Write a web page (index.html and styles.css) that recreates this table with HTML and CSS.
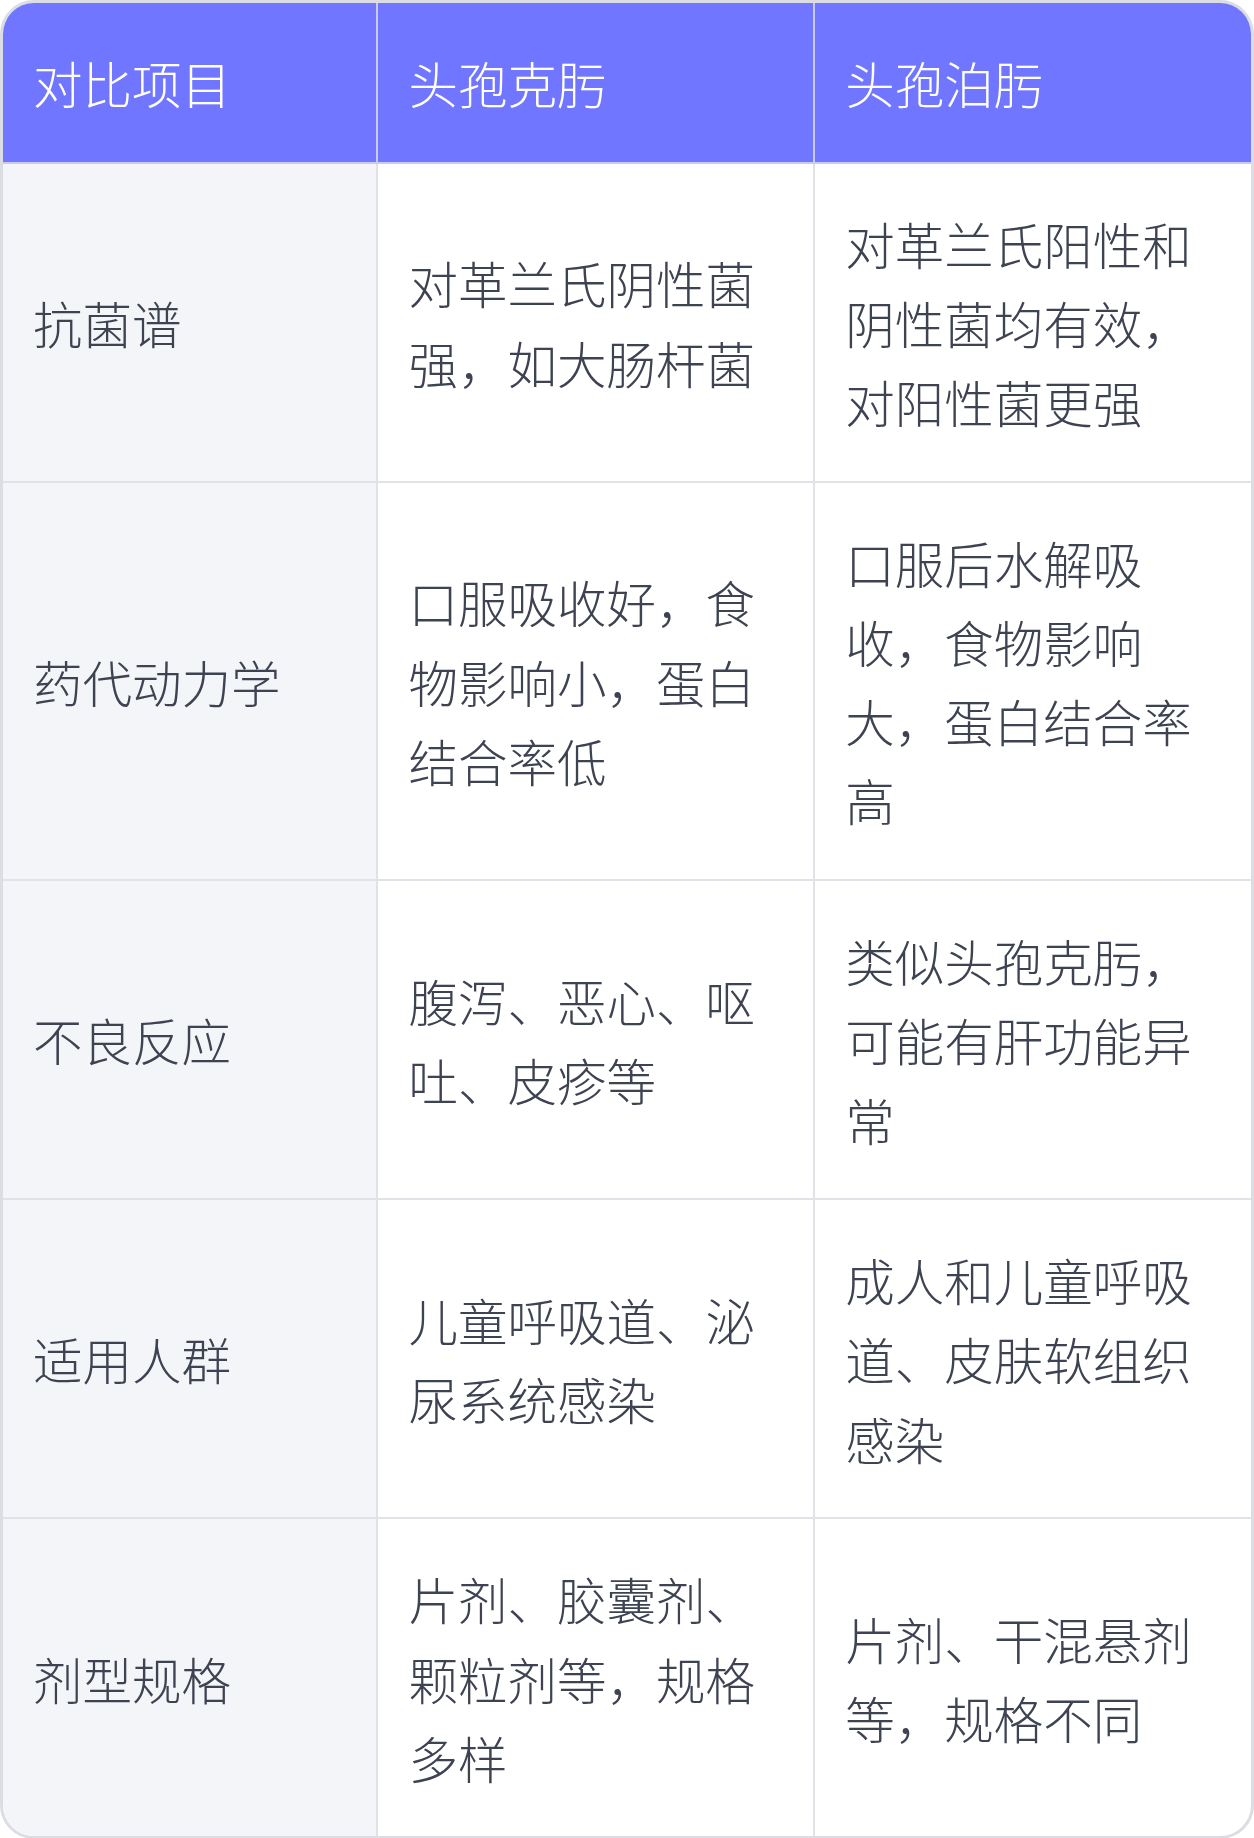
FILE: index.html
```html
<!DOCTYPE html>
<html lang="zh-CN">
<head>
<meta charset="utf-8">
<link rel="stylesheet" href="styles.css">
</head>
<body>
<div class="wrap">
<table class="cmp">
<colgroup><col class="c1"><col class="c2"><col class="c3"></colgroup>
<thead>
<tr><th>对比项目</th><th>头孢克肟</th><th>头孢泊肟</th></tr>
</thead>
<tbody>
<tr><td>抗菌谱</td><td>对革兰氏阴性菌强，如大肠杆菌</td><td>对革兰氏阳性和阴性菌均有效，对阳性菌更强</td></tr>
<tr><td>药代动力学</td><td>口服吸收好，食物影响小，蛋白结合率低</td><td>口服后水解吸收，食物影响大，蛋白结合率高</td></tr>
<tr><td>不良反应</td><td>腹泻、恶心、呕吐、皮疹等</td><td>类似头孢克肟，可能有肝功能异常</td></tr>
<tr><td>适用人群</td><td>儿童呼吸道、泌尿系统感染</td><td>成人和儿童呼吸道、皮肤软组织感染</td></tr>
<tr><td>剂型规格</td><td>片剂、胶囊剂、颗粒剂等，规格多样</td><td>片剂、干混悬剂等，规格不同</td></tr>
</tbody>
</table>
</div>
</body>
</html>
```
FILE: styles.css
```css
html, body {
  margin: 0;
  padding: 0;
  background: #ffffff;
}
.wrap {
  width: 1254px;
  box-sizing: border-box;
  border: 3px solid #dcdde2;
  border-radius: 34px;
  overflow: hidden;
  background: #ffffff;
}
.cmp {
  width: 100%;
  border-collapse: collapse;
  table-layout: fixed;
  font-family: "Noto Sans CJK SC", "Noto Sans", sans-serif;
  font-size: 49.5px;
  line-height: 79.2px;
  font-weight: 300;
}
.c1 { width: 30%; }
.c2 { width: 35%; }
.c3 { width: 35%; }
.cmp th, .cmp td {
  padding: 40px 30px 39.5px;
  text-align: left;
  vertical-align: middle;
  border-right: 2px solid #e1e2e7;
  border-bottom: 2px solid #e1e2e7;
}
.cmp th:last-child, .cmp td:last-child { border-right: none; }
.cmp tbody tr:last-child td { border-bottom: none; }
.cmp th {
  background: #7076ff;
  color: #ffffff;
  font-weight: 300;
  border-right-color: #c9cbf5;
  border-bottom-color: #c9cbf0;
}
.cmp td {
  color: #3e4351;
}
.cmp td:first-child {
  background: #f4f5f9;
}
```
